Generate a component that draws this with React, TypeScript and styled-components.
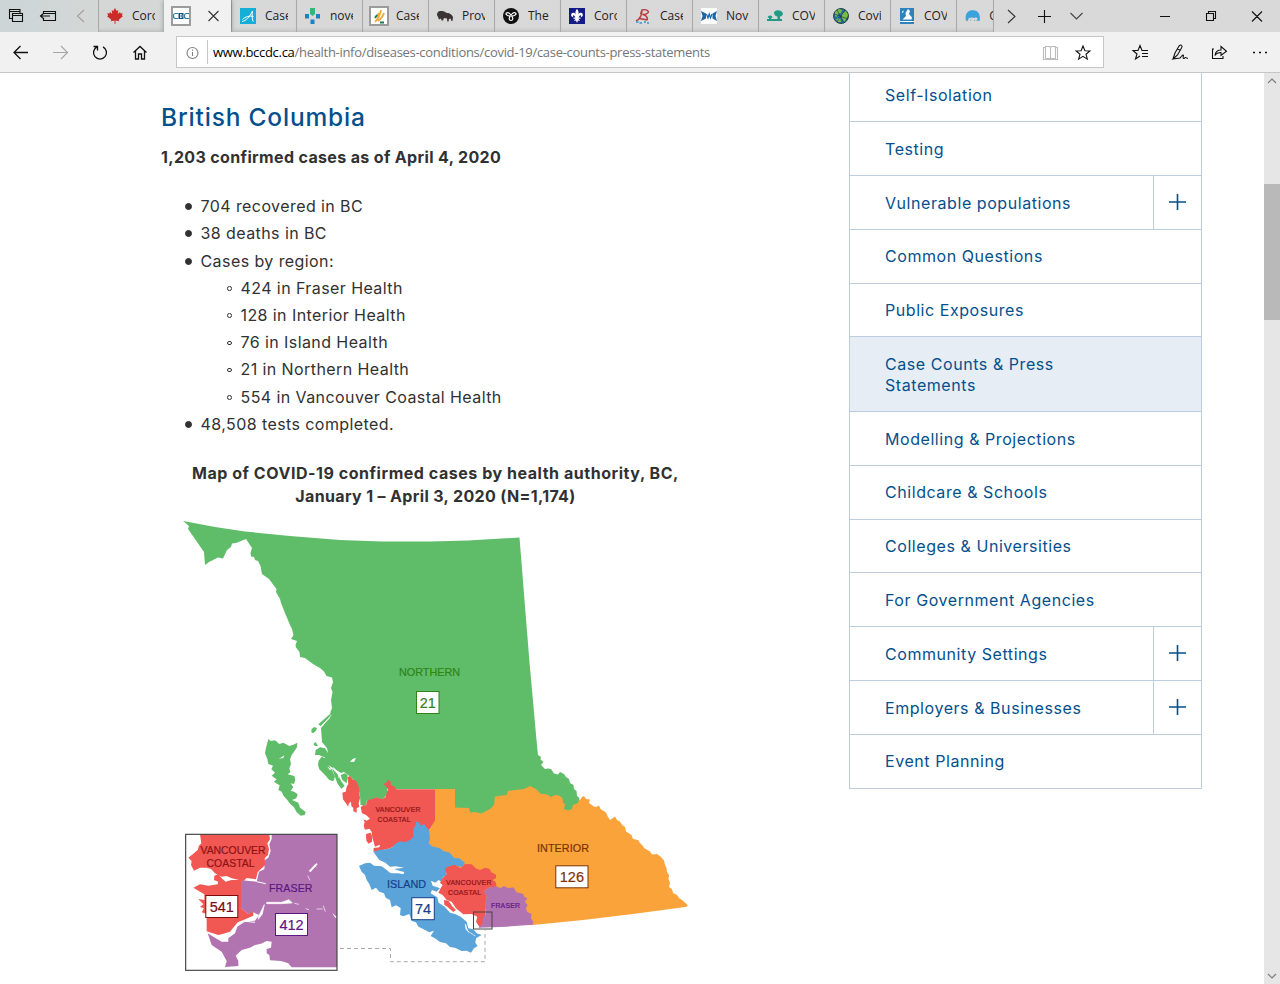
import React from "react";
import styled, { createGlobalStyle, css } from "styled-components";

const GlobalStyle = createGlobalStyle`
  * { box-sizing: border-box; }
  body { margin: 0; background: #fff; overflow: hidden; }
`;

const uiFont = css`font-family: "Open Sans", "Noto Sans", sans-serif;`;
const pageFont = css`font-family: Inter, "Liberation Sans", sans-serif;`;

const Browser = styled.div`
  width: 1280px;
  height: 984px;
  display: flex;
  flex-direction: column;
  overflow: hidden;
`;

/* ---------- tab strip ---------- */
const TabStrip = styled.header`
  height: 32px;
  flex: none;
  display: flex;
  background: linear-gradient(90deg, #cdd5d6 0, #d3d7d6 90px, #d8d8d8 300px, #d9d9d9 100%);
`;
const StripButtons = styled.div`
  width: 98px;
  flex: none;
  display: flex;
`;
const Tab = styled.div<{ $active?: boolean; $w?: number }>`
  ${uiFont}
  width: ${(p) => p.$w ?? 66}px;
  flex: none;
  display: flex;
  align-items: center;
  gap: 9px;
  padding-left: 8px;
  border-left: 1px solid ${(p) => (p.$active ? "#f1f1f1" : "#a9a9a9")};
  background: ${(p) => (p.$active ? "#f1f1f1" : "transparent")};
  box-shadow: ${(p) => (p.$active ? "0 0 5px rgba(0,0,0,.35)" : "inset 0 -4px 4px -3px rgba(0,0,0,.16)")};
  position: relative;
  z-index: ${(p) => (p.$active ? 1 : 0)};
  clip-path: inset(0 ${(p) => (p.$active ? "-6px" : "0")} 0 ${(p) => (p.$active ? "-6px" : "0")});
`;
const TabTitle = styled.span<{ $w?: number }>`
  width: ${(p) => p.$w ?? 23}px;
  overflow: hidden;
  white-space: nowrap;
  font-size: 12px;
  line-height: 16px;
  color: #222;
`;
const StripEnd = styled.div`
  flex: 1;
  display: flex;
  border-left: 1px solid #a9a9a9;
`;
const Glyph = styled.svg`
  display: block;
  flex: none;
  overflow: visible;
  fill: none;
  stroke: #111;
  stroke-width: 1.1;
`;

/* ---------- address bar ---------- */
const Toolbar = styled.div`
  height: 41px;
  flex: none;
  display: flex;
  align-items: center;
  background: #f1f1f1;
  border-bottom: 1px solid #c6c6c6;
`;
const NavButtons = styled.div`
  width: 176px;
  display: flex;
`;
const AddressBox = styled.div`
  ${uiFont}
  width: 928px;
  height: 32px;
  display: flex;
  align-items: center;
  background: #fff;
  border: 1px solid #c6c6c6;
`;
const Address = styled.div`
  flex: 1;
  border-left: 1px solid #c6c6c6;
  height: 24px;
  line-height: 24px;
  padding-left: 5px;
  font-size: 13px;
  letter-spacing: -0.298px;
  color: #757575;
  white-space: nowrap;
`;
const Host = styled.span`color: #000;`;
const Actions = styled.div`
  flex: 1;
  display: flex;
`;

/* ---------- page ---------- */
const Page = styled.div`
  flex: 1;
  min-height: 0;
  display: flex;
  ${pageFont}
  color: #313132;
`;
const Article = styled.main`
  width: 849px;
  flex: none;
  padding: 29px 0 0 161px;
`;
const Title = styled.h2`
  margin: 0;
  font-size: 24.500px;
  font-weight: 500;
  line-height: 30px;
  letter-spacing: 0.82px;
  color: #04508c;
`;
const Lead = styled.p`
  margin: 13px 0 24.200px;
  font-size: 16px;
  font-weight: 700;
  line-height: 24px;
  letter-spacing: 0.35px;
`;
const List = styled.ul<{ $nested?: boolean }>`
  list-style: none;
  margin: 0;
  padding-left: ${(p) => (p.$nested ? 27 : 24)}px;
  font-size: 16px;
  line-height: 27.2px;
  letter-spacing: 0.42px;
`;
const Row = styled.div`
  display: flex;
  align-items: center;
`;
const Dot = styled.span<{ $open?: boolean }>`
  width: ${(p) => (p.$open ? 4.6 : 7)}px;
  height: ${(p) => (p.$open ? 4.6 : 7)}px;
  margin-right: ${(p) => (p.$open ? 8.9 : 8.5)}px;
  border-radius: 50%;
  border: 1px solid #313132;
  background: ${(p) => (p.$open ? "transparent" : "#313132")};
`;
const SubIndent = styled.div`padding-left: 15px;`;
const Figure = styled.figure`
  margin: 23.800px 0 0;
  width: 549px;
`;
const Caption = styled.figcaption`
  font-size: 16px;
  font-weight: 700;
  line-height: 23px;
  text-align: center;
`;
const CaptionLine = styled.div<{ $spacing: number }>`
  letter-spacing: ${(p) => p.$spacing}px;
`;
const MapSvg = styled.svg`
  display: block;
  margin-top: 7px;
`;

const SideNav = styled.nav`
  width: 353px;
  height: 716px;
  flex: none;
  border: 1px solid #bccddf;
  border-top: 0;
`;
const NavItem = styled.div<{ $h: number; $active?: boolean; $last?: boolean }>`
  height: ${(p) => p.$h}px;
  display: flex;
  border-bottom: ${(p) => (p.$last ? 0 : 1)}px solid #bccddf;
  background: ${(p) => (p.$active ? "#e6edf4" : "#fff")};
`;
const NavLabel = styled.span<{ $top: number }>`
  flex: 1;
  padding: ${(p) => p.$top}px 0 0 35px;
  font-size: 16px;
  line-height: 21px;
  letter-spacing: 0.56px;
  color: #04508c;
  white-space: pre-line;
`;
const Expander = styled.span`
  width: 48px;
  display: flex;
  justify-content: center;
  padding-top: 17px;
  border-left: 1px solid #bccddf;
`;
const Gutter = styled.div`flex: 1;`;
const ScrollTrack = styled.div`
  width: 16px;
  background: #e6e6e6;
  display: flex;
  flex-direction: column;
  justify-content: space-between;
`;
const ScrollThumb = styled.div`
  height: 136px;
  margin: 95px 0 auto;
  background: #b9b9b9;
`;

/* ---------- favicons ---------- */
const Fav = ({ children }: { children: React.ReactNode }) => (
  <svg width="16" height="16" viewBox="0 0 16 16">{children}</svg>
);
const FramedFav = styled.span`
  width: 20px;
  height: 20px;
  margin: 0 -2px;
  flex: none;
  display: flex;
  background: #fff;
  border: 2px solid #9b9b9b;
`;

const favs: Record<string, React.ReactNode> = {
  leaf: <Fav><path fill="#cc2a26" d="M8 0l1.7 3 1.6-.9-.5 4 2.2-2 .6 1.5 2.1-.3-.8 2.3 1 .7-4.2 3.4.5 1.5-3.7-.6L8.400 16h-.8l-.1-3.400-3.700.6.5-1.500L.1 8.300l1-.7L.3 5.300l2.100.3L3 4.100l2.200 2-.5-4 1.600.9z" /></Fav>,
  alberta: <Fav><path fill="#15aed6" d="M0 0h16v16H0z" /><path d="M2 13.500c4-.5 8-5 10.500-10.500-.5 4-.8 7 .7 10.500M2.500 11.500c3-3 7-4 11-3" fill="none" stroke="#fff" strokeWidth="1" /></Fav>,
  sask: <Fav><path fill="#2fb780" d="M5 0h5v6l-2.500 2L5 6z" /><path fill="#1884c7" d="M0 6h4v4.500H0zM11 6h4v4.500h-4zM5.500 11.500h4V16h-4z" /></Fav>,
  ab2: <Fav><path d="M4 14C7 11 9 7 10 2M7 13c3-2 5-5 6-8M5 9l3-4" fill="none" stroke="#f0a93c" strokeWidth="1.800" /><path d="M4 10l2-3M9 14.500h4" fill="none" stroke="#127a52" strokeWidth="1.800" /></Fav>,
  bison: <Fav><path fill="#3a3534" d="M0 7c0-3 2-4.500 4-4 3-.5 4 1 6 2 3 0 5 2 6 4l-.5 4h-1l-1-2.500-1.500.5-.5 2.500h-1.200l-.3-3-3-.5-1 2.500H4.500L4 10.500l-2 1L1 9z" /></Fav>,
  ontario: <Fav><circle cx="8" cy="8" r="8" fill="#111" /><path d="M8 7.500C7 5 5 4 3.500 5S4 8 7.500 8M8 7.500C9 5 11 4 12.500 5S12 8 8.500 8M7.500 8c-2 2-1.500 4.500.5 4.500s2.500-2.500.5-4.500" fill="none" stroke="#fff" strokeWidth="1.200" /></Fav>,
  quebec: <Fav><path fill="#151b86" d="M0 0h16v16H0z" /><path fill="#fff" d="M8 1c2 2 2 4 .8 7 .7-3 2-4 4-3 2 1.500 1 4-1 4 .5-1 0-2-1-1.500L9.500 9.500h2v1.300h-2L11 13l-2-.5L8 15l-1-2.500L5 13l1.500-2.200h-2V9.500h2L5.200 7.500C4.200 7 3.700 8 4.200 9c-2 0-3-2.500-1-4 2-1 3.300 0 4 3C6 5 6 3 8 1z" /></Fav>,
  nb: <Fav><path d="M1 13c4-2 6-6 6-11 3-1 6 0 6.500 2-1 2-3.500 2.500-6 2.500 3 .5 5 2.500 5 5.500M4.500 10.500l8 1.500M7 2L5.500 6" fill="none" stroke="#b83a3e" strokeWidth="1.400" /><path d="M1 14h2.500m1 1h2.500m2-1h2m1 1h2" stroke="#3298d8" strokeWidth="1.500" /></Fav>,
  ns: <Fav><path fill="#fff" d="M0 0h16v16H0z" /><path fill="#1e66ae" d="M0 3l5 2.500v5L0 13l1.500-5zM16 3l-4.500 2.500v5L16 13l-1.500-5z" /><path d="M5.500 6l1.500 4 1.200-4 1.300 4 1.500-4" fill="none" stroke="#1e66ae" strokeWidth="1.200" /></Fav>,
  pei: <Fav><path fill="#1f9c85" d="M7 4.500c1-2 3-2.500 5-2 2 0 3 1 4 3-.3 2-1.500 3-3 3v2.500h2v2H0v-2h2V10C0 9.500.500 8 3 7.500c2 0 3 1.500 2 2.500l-1 .5v.500h6.500V8.500C9 8.500 7 7 7 4.500z" /></Fav>,
  globe: <Fav><circle cx="8" cy="8" r="7.500" fill="#256fa6" stroke="#28483b" /><path fill="#79bd46" d="M2 4l4-3 3 1-1 3-3 1-1 3-2-1zM9 6l4-3 2 4-2 4-2 3-2-4zM3 11l4-1 1 4-3 0z" /><path d="M1 6l14 5M4 2l7 13M12 2L4 14" stroke="#19382c" strokeWidth=".6" /></Fav>,
  bear: <Fav><path fill="#2e83bd" d="M1 0h14v16H1z" /><path fill="#fff" d="M9 1l2 2-1 3 3 3.500-.5 2H3.500L7 8l-.5-3zM1 13h14v1H1zM3 3.500l2-1-1.500 3z" /></Fav>,
  wave: <Fav><path fill="#3ba3db" d="M1 13C-.5 6 3 2 8 2s8.500 3 7.500 11H12l1.500-3L11 9.500l-1.500.7-2-.7L4 10l-1 3zM5 12.500l1-1 1 1zM9 13l1-1 1 1z" /></Fav>,
};

const tabs = [
  ["alberta", "Case"], ["sask", "nove"], ["ab2", "Case"], ["bison", "Prov"], ["ontario", "The"],
  ["quebec", "Coro"], ["nb", "Case"], ["ns", "Nov"], ["pei", "COVI"], ["globe", "Covi"], ["bear", "COVI"],
];

const navItems: { label: string; h: number; top: number; plus?: boolean; active?: boolean; last?: boolean }[] = [
  { label: "Self-Isolation", h: 49, top: 12 },
  { label: "Testing", h: 54, top: 17 },
  { label: "Vulnerable populations", h: 54, top: 17, plus: true },
  { label: "Common Questions", h: 54, top: 16 },
  { label: "Public Exposures", h: 53, top: 16 },
  { label: "Case Counts & Press\nStatements", h: 75, top: 17, active: true },
  { label: "Modelling & Projections", h: 54, top: 17 },
  { label: "Childcare & Schools", h: 54, top: 16 },
  { label: "Colleges & Universities", h: 53, top: 16 },
  { label: "For Government Agencies", h: 54, top: 17 },
  { label: "Community Settings", h: 54, top: 17, plus: true },
  { label: "Employers & Businesses", h: 54, top: 17, plus: true },
  { label: "Event Planning", h: 53, top: 16, last: true },
];

/* ---------- map ---------- */
const GREEN = "#5fbd69";
const RED = "#f15753";
const BLUE = "#5ba4da";
const ORANGE = "#fba33b";
const PURPLE = "#b174b1";

const MapLabel = ({ x, y, w, size, fill, children }: { x: number; y: number; w: number; size: number; fill: string; children: string }) => (
  <text x={x} y={y} textLength={w} fontSize={size} fill={fill} stroke={fill} strokeWidth=".2" fontFamily="Liberation Sans, Arial, sans-serif">{children}</text>
);
const CountBox = ({ x, y, w, h = 22, fill, children }: { x: number; y: number; w: number; h?: number; fill: string; children: string }) => (
  <g>
    <rect x={x} y={y} width={w} height={h} fill="#fff" stroke={fill} strokeWidth="1" />
    <text x={x + w / 2} y={y + h / 2 + 5.200} textAnchor="middle" fontSize="14.500" fill={fill} stroke={fill} strokeWidth=".2" fontFamily="Liberation Sans, Arial, sans-serif">{children}</text>
  </g>
);

const HealthMap = () => (
  <MapSvg width="549" height="469" viewBox="161 515 549 469">
    <polygon fill={ORANGE} points="435,789 455,789 500,780 575,795 580,800 582,797 584,796 586,799 590,799.500 589,803 594,806.500 596,807 599,805.500 600.500,809 606,812.500 608,817 610,820 613,818 615,816.500 617,820 620,821.500 622,825 625,827 626,831.500 631.500,835 633,839 638,840 640,843 643,846 644,848 650,851.500 652,854.500 657,854 661,857 664,860.500 665,865 666.500,868 667,872 669,875 668.500,879 670,883 669,887 672,889 673,893 677,895 679,898 682,900 687.700,905 687,906.700 633,914 583,920 533,925 500,925 430,848" />
    <polygon fill={GREEN} points="183,521 194,523 215,527 245,531.500 290,536 340,540 382,541.500 430,541.500 468,540.500 519.500,537.500 529.300,660 536.500,740 538,755 541,757 540.500,759.500 543.500,762 541,765 545,769 548,768.500 551,769 554,773.500 558,774.500 560,772 564,774 566,777 569,779 570,783 573.500,785 574,789 576.500,791 577,796 579.500,798 578,803 573,805 572,809 568,810.500 564,809 565,804 563,803 562.500,798 559,795.500 555,795 551,797 546,794 541,794 536,789 530,786 524,789 515,790 508,791 506.500,795 495,796.500 494,805 490,809 481.500,813.500 475,812 470,812.500 469,808 455,807.500 455,789 395,789 387,787 388,793 385,797 381.500,799.500 376.500,797.500 372,800 367,800 366,805.700 360.500,805 360,795 358,787 355,781 350,776.500 344,772 341,773 333,768 328,765 324,756 328,753 327,748 322,742 321,728 326,722 330,718 330.500,712 332,708 331,700 332.500,692 331,688 333,682 332,677.500 326.500,676 324,671.500 320,668 313,664 305,658 300,657 299.500,652 296,647.500 295.500,645 297,641 291,639 293.500,635 292,629 290,625 285,613 281,603 280,599 276,592 276.500,589 269,579 262,574 260.500,566 258,561 255,560 254,557 251,556.500 250.500,553 252,548 246,539 241,541 236,543 232,543.500 231,547 227,550 223,558.500 218,557.500 209,562 205,565 204,552 195,539 188,529 189,526" />
    {/* coastal islands of the north */}
    <g transform="translate(250 640) scale(.3333)" fill={GREEN}>
      <polygon points="55,297 62,303 75,301 88,312 100,308 118,318 130,314 142,308 141,322 132,335 125,345 120,358 123,372 118,385 121,397 113,403 133,408 136,420 132,432 122,430 130,442 122,452 134,456 143,463 139,475 126,480 145,488 150,503 167,516 164,525 152,527 139,515 132,502 121,492 112,480 101,468 95,455 85,450 89,436 78,430 72,425 80,418 65,407 75,398 64,388 69,377 55,372 52,357 45,340 47,328" />
      <polygon points="185,268 192,261 201,264 198,272 189,280 184,277" />
      <polygon points="190,312 197,306 204,318 195,318" />
      <polygon points="195,345 197,330 210,322 225,325 236,342 222,352 208,345" />
      <polygon points="204,375 206,362 215,350 232,358 235,375 245,388 255,410 250,424 238,420 225,405 208,388" />
      <polygon points="246,385 262,402 275,425 284,438 274,446 262,430" />
      <polygon points="272,405 285,400 293,406 290,430 277,420" />
      <polygon points="205,253 222,238 243,220 240,230 212,258" />
      <path d="M300 366l7-8 11-5-5 12zM86 356l10-5 7-5-3 8zM232 380l12 6-4 5z" fill="#fff" />
      <path d="M215 260l15-18 14-17M250 382l18 18-2 14" stroke="#fff" strokeWidth="2" fill="none" />
    </g>
    {/* central and southern coast */}
    <g transform="translate(340 760) scale(.3333)">
      <polygon fill={RED} points="22,52 30,48 38,58 48,62 56,78 58,95 60,115 56,130 58,140 50,145 50,158 40,154 40,144 34,138 33,125 27,130 24,140 18,130 9,118 7,98 17,95 20,80 25,72" />
      <polygon fill={RED} points="82,120 95,118 110,112 125,118 137,111 141,95 145,90 139,80 130,72 138,69 145,59 152,66 153,76 165,80 168,88 285,88 285,182 268,210 258,240 200,255 170,252 158,262 140,268 118,272 100,275 101,264 118,262 120,254 105,260 101,246 97,232 95,215 88,206 75,209 71,198 74,187 70,178 80,182 90,176 78,165 66,160 62,142 70,135 78,137" />
      <polygon fill={RED} points="78,222 92,218 97,230 96,245 85,251 79,241" />
      <polygon fill={ORANGE} points="285,182 268,210 258,262 300,270 320,230" />
      <polygon fill={BLUE} points="100,275 118,270 140,268 158,262 165,252 180,244 195,247 210,240 220,230 220,205 226,198 228,185 237,187 243,197 252,192 259,202 267,210 270,235 266,250 276,259 300,265 310,273 330,278 342,294 358,295 375,308 366,322 345,316 330,320 326,330 318,325 320,345 310,350 304,365 296,360 286,368 273,362 278,377 300,385 290,395 276,390 272,400 292,412 296,428 315,441 330,458 345,462 362,470 380,485 385,505 400,508 410,520 425,525 408,535 406,548 413,558 402,565 393,578 380,572 365,573 345,563 330,561 318,550 300,546 287,536 272,528 282,512 268,517 245,505 235,500 228,487 215,483 208,462 190,469 180,465 182,444 168,436 155,442 150,420 137,413 132,400 118,395 108,383 95,390 88,372 80,360 75,345 65,335 57,318 75,310 90,308 102,317 125,319 140,330 152,340 175,340 190,343 193,336 180,333 162,327 192,323 168,319 150,320 136,308 118,300" />
      <polygon fill={RED} points="330,318 345,314 362,325 375,312 395,313 407,325 420,330 435,323 448,326 454,337 468,344 468,354 458,360 467,366 470,380 448,382 432,394 440,410 435,440 437,470 430,490 420,503 408,485 412,470 395,462 370,463 348,445 335,425 320,420 308,405 295,398 302,385 308,375 300,368 310,352 320,343 315,325" />
      <polygon fill={RED} points="312,420 325,422 337,438 348,450 340,456 322,440 313,434" />
      <polygon fill={PURPLE} points="448,382 470,380 482,384 492,378 505,385 520,382 530,397 550,402 552,410 562,415 555,425 563,435 558,445 562,456 575,462 573,475 580,485 578,494 500,500 415,503 428,492 428,475 437,462 435,440 440,410 432,394" />
      <path d="M376 492l6 18 6 8-10-10zM335 436l12 12M288 375l14 3M390 518l16 10" stroke="#fff" strokeWidth="2" fill="#fff" />
    </g>
    <rect x="473.500" y="912" width="18.500" height="17" fill="none" stroke="#444" />
    <path d="M340 948.500h50.500v13.200H485V930" fill="none" stroke="#aaa" strokeDasharray="4 3" />

    <MapLabel x={399} y={676} w={61} size={10.800} fill="#2f8417">NORTHERN</MapLabel>
    <CountBox x={416.500} y={691.500} w={22.500} fill="#2f8417">21</CountBox>
    <MapLabel x={375.500} y={812} w={45} size={6.900} fill="#8e1313">VANCOUVER</MapLabel>
    <MapLabel x={377.500} y={822} w={33} size={6.900} fill="#8e1313">COASTAL</MapLabel>
    <MapLabel x={446} y={885} w={45.500} size={6.900} fill="#8e1313">VANCOUVER</MapLabel>
    <MapLabel x={448} y={894.500} w={33} size={6.900} fill="#8e1313">COASTAL</MapLabel>
    <MapLabel x={537} y={852} w={52} size={10.800} fill="#7c3300">INTERIOR</MapLabel>
    <CountBox x={555.800} y={865.800} w={32.200} fill="#7c3300">126</CountBox>
    <MapLabel x={387} y={888} w={39} size={10.800} fill="#173f86">ISLAND</MapLabel>
    <CountBox x={411.800} y={897.700} w={22.500} fill="#173f86">74</CountBox>
    <MapLabel x={491} y={908} w={29} size={6.900} fill="#5b1784">FRASER</MapLabel>

    {/* lower mainland inset */}
    <g transform="translate(175 825) scale(.3333)">
      <rect x="32" y="28" width="454" height="408" fill="#fff" />
      <polygon fill={PURPLE} points="290,28 486,28 486,427 350,427 340,415 318,408 285,406 283,390 275,385 275,372 288,368 290,350 275,348 258,356 240,360 225,368 200,375 182,392 190,408 190,423 150,426 155,408 140,380 110,360 98,325 115,335 140,350 160,350 160,340 180,325 187,305 205,290 240,287 252,270 235,262 220,267 198,250 198,165 222,168 245,170 252,140 268,133 270,105 280,98 287,78 283,58 290,42" />
      <polygon fill={RED} points="75,28 283,28 285,43 277,55 282,72 279,90 269,100 271,120 255,134 248,142 243,163 215,159 205,168 170,160 155,153 140,155 120,145 108,132 95,128 75,128 57,137 48,120 50,108 40,98 55,86 68,75 72,62 79,55" />
      <polygon fill={RED} points="118,152 130,147 140,160 152,170 170,165 198,165 198,250 220,267 235,258 235,272 205,285 188,292 165,320 145,326 130,330 95,319 95,267 80,262 87,250 75,246 85,238 70,222 88,225 88,208 75,200 55,188 75,178 100,182 128,178 130,170 117,165" />
      <path d="M403 137l20-21 4 1-21 24zM275 232l45 0 22-8 10 10-35 2-42 0zM250 275l18-36-6 28-12 16zM398 152l7 14M392 251l10 3M425 252h18M445 242l6 18M474 266l7 11h5M358 235l14 3M420 122l4 5" stroke="#fff" strokeWidth="2" fill="#fff" />
      <path d="M190 301l20-12 30 3M245 170l27 6" stroke="#fff" strokeWidth="3" fill="none" />
      <rect x="32" y="28" width="454" height="408" fill="none" stroke="#444" strokeWidth="3.500" />
    </g>
    <MapLabel x={200.500} y={853.700} w={65} size={10.400} fill="#8e1313">VANCOUVER</MapLabel>
    <MapLabel x={206.500} y={866.700} w={48} size={10.400} fill="#8e1313">COASTAL</MapLabel>
    <MapLabel x={269} y={892} w={43.500} size={10.600} fill="#5b1784">FRASER</MapLabel>
    <CountBox x={205.800} y={895.500} w={32} fill="#7c0c0c">541</CountBox>
    <CountBox x={275.500} y={913.500} w={32} fill="#5b1784">412</CountBox>
  </MapSvg>
);

const Item = ({ children, open }: { children: React.ReactNode; open?: boolean }) => (
  <li><Row><Dot $open={open} />{children}</Row></li>
);

export default function App() {
  return (
    <>
      <GlobalStyle />
      <Browser>
        <TabStrip>
          <StripButtons>
            <Glyph width="98" height="32" viewBox="0 0 98 32">
              <path d="M12.500 18.500h-3v-9h10.500v4M9.500 11.500h10.500" />
              <path d="M12.500 21.500v-8h10v8zM12.500 15.500h10" />
              <path d="M43.500 13.500v-2h12v9h-12v-2M43.500 13.500h12M41 16h9M44 13l-3.500 3 3.500 3" />
              <path d="M84 10l-6.500 6 6.500 6" stroke="#a0a0a0" />
            </Glyph>
          </StripButtons>
          <Tab>{favs.leaf}<TabTitle>Coro</TabTitle></Tab>
          <Tab $active $w={67}>
            <FramedFav>
              <svg width="16" height="16" viewBox="0 0 16 16">
                <path fill="#124b78" d="M5.500 5h5v6h-5z" />
                <path d="M5 5.500H2.500a2 2 0 0 0-2 2v1a2 2 0 0 0 2 2H5M16 5.500h-2.500a2 2 0 0 0-2 2v1a2 2 0 0 0 2 2H16" fill="none" stroke="#2c7fa0" strokeWidth="1.200" />
                <path d="M7.500 6v4M7.500 6.500h1.500v3H7.500" stroke="#fff" strokeWidth=".7" fill="none" />
              </svg>
            </FramedFav>
            <Glyph width="26" height="32" viewBox="0 0 26 32"><path d="M10.500 11l10 10M20.500 11l-10 10" stroke="#333" /></Glyph>
          </Tab>
          {tabs.map(([icon, title], i) => (
            <Tab key={i} $w={i === 0 ? 65 : 66}>
              {icon === "ab2" ? <FramedFav>{favs[icon]}</FramedFav> : favs[icon]}
              <TabTitle>{title}</TabTitle>
            </Tab>
          ))}
          <Tab $w={37}>{favs.wave}<TabTitle $w={4}>C</TabTitle></Tab>
          <StripEnd>
            <Glyph width="286" height="32" viewBox="994 0 286 32">
              <path d="M1008 10l7 6.500-7 6.500" stroke="#333" />
              <path d="M1038 16.500h13M1044.500 10v13" />
              <path d="M1070.500 13l6 6 6-6" stroke="#444" />
              <path d="M1160 16.500h10M1206.500 13.500h7v7h-7zM1208.500 13.500v-2h7v7h-2M1252 11.500l10 10M1262 11.500l-10 10" />
            </Glyph>
          </StripEnd>
        </TabStrip>
        <Toolbar>
          <NavButtons>
            <Glyph width="176" height="40" viewBox="0 32 176 40">
              <path d="M28 52.500H14M20.500 46l-6.500 6.500 6.500 6.500" strokeWidth="1.300" />
              <path d="M53 52.500h14M61 46l6.500 6.500-6.500 6.500" stroke="#a5a5a5" />
              <path d="M103 46.800a6.500 6.500 0 1 1-6 0M93.500 46.500h4v4" strokeWidth="1.300" />
              <path d="M133.500 52.500l6.500-6 6.500 6M135.500 51v8h3v-5h3v5h3v-8" strokeWidth="1.300" />
            </Glyph>
          </NavButtons>
          <AddressBox>
            <Glyph width="30" height="30" viewBox="177 37 30 30">
              <circle cx="192.500" cy="53" r="5.500" stroke="#808080" /><path d="M192.500 52v4M192.500 49.500v1.200" stroke="#808080" />
            </Glyph>
            <Address><Host>www.bccdc.ca</Host>/health-info/diseases-conditions/covid-19/case-counts-press-statements</Address>
            <Glyph width="66" height="30" viewBox="1037 37 66 30">
              <path d="M1045.500 47.500h-2v12h14v-12h-2M1050.500 47.500v11M1045.500 58.500v-12h4l1 1 1-1h4v12h-10" stroke="#bdbdbd" />
              <path d="M1083 46l1.900 4.700 5 .3-3.900 3.200 1.300 4.900-4.300-2.700-4.300 2.700 1.300-4.900-3.900-3.200 5-.3z" />
            </Glyph>
          </AddressBox>
          <Actions>
            <Glyph width="176" height="40" viewBox="1104 32 176 40">
              <path d="M1148 50.500h-6L1140 45.500l-2 5h-5l4 3.500-1.500 5 4.500-3M1142 53.500h6M1142 56.500h6" />
              <path d="M1173 59l2-6 4-7c2-2 4-.5 2.500 2l-4 7-4.500 4 7-1c2-2 2-3 3-3 1.500 0-1 3 .5 3.500 1 .3 1-1 2-1s1 1 2.500.8M1177 49l3 1" />
              <path d="M1214 49h-1.500v9.500h10.500V56M1215 55.500c.5-4 3-5.500 6-5.500v-3.500l5.500 4.800-5.500 4.200v-3c-3 0-4.500.5-6 3z" />
              <path d="M1253 52.500h2M1259 52.500h2M1265 52.500h2" strokeWidth="1.600" />
            </Glyph>
          </Actions>
        </Toolbar>
        <Page>
          <Article>
            <Title>British Columbia</Title>
            <Lead>1,203 confirmed cases as of April 4, 2020</Lead>
            <List>
              <Item>704 recovered in BC</Item>
              <Item>38 deaths in BC</Item>
              <Item>Cases by region:</Item>
              <li>
                <SubIndent>
                  <List $nested>
                    <Item open>424 in Fraser Health</Item>
                    <Item open>128 in Interior Health</Item>
                    <Item open>76 in Island Health</Item>
                    <Item open>21 in Northern Health</Item>
                    <Item open>554 in Vancouver Coastal Health</Item>
                  </List>
                </SubIndent>
              </li>
              <Item>48,508 tests completed.</Item>
            </List>
            <Figure>
              <Caption>
                <CaptionLine $spacing={0.54}>Map of COVID-19 confirmed cases by health authority, BC,</CaptionLine>
                <CaptionLine $spacing={0.35}>January 1 – April 3, 2020 (N=1,174)</CaptionLine>
              </Caption>
              <HealthMap />
            </Figure>
          </Article>
          <SideNav>
            {navItems.map((n) => (
              <NavItem key={n.label} $h={n.h} $active={n.active} $last={n.last}>
                <NavLabel $top={n.top}>{n.label}</NavLabel>
                {n.plus && (
                  <Expander>
                    <Glyph width="17" height="17" viewBox="0 0 17 17"><path d="M0 9h17M8.500 1v16" stroke="#04508c" strokeWidth="1.600" /></Glyph>
                  </Expander>
                )}
              </NavItem>
            ))}
          </SideNav>
          <Gutter />
          <ScrollTrack>
            <Glyph width="16" height="16" viewBox="0 0 16 16"><path d="M4 10l4-4 4 4" stroke="#7a7a7a" /></Glyph>
            <ScrollThumb />
            <Glyph width="16" height="16" viewBox="0 0 16 16"><path d="M4 6l4 4 4-4" stroke="#7a7a7a" /></Glyph>
          </ScrollTrack>
        </Page>
      </Browser>
    </>
  );
}
